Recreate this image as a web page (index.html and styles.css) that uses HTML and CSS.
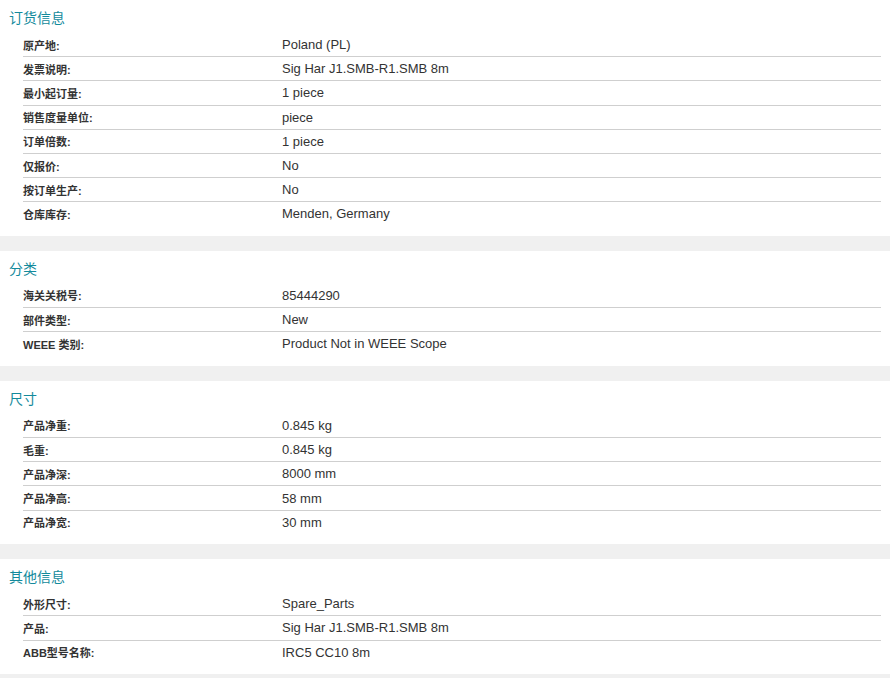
FILE: index.html
```html
<!DOCTYPE html>
<html lang="zh-CN">
<head>
    <meta charset="UTF-8">
    <title>产品信息</title>
    <link rel="stylesheet" href="styles.css">
</head>
<body>

    <div class="section">
        <h2>订货信息</h2>
        <div class="rows">
            <div class="row"><span class="label">原产地:</span><span class="value">Poland (PL)</span></div>
            <div class="row"><span class="label">发票说明:</span><span class="value">Sig Har J1.SMB-R1.SMB 8m</span></div>
            <div class="row"><span class="label">最小起订量:</span><span class="value">1 piece</span></div>
            <div class="row"><span class="label">销售度量单位:</span><span class="value">piece</span></div>
            <div class="row"><span class="label">订单倍数:</span><span class="value">1 piece</span></div>
            <div class="row"><span class="label">仅报价:</span><span class="value">No</span></div>
            <div class="row"><span class="label">按订单生产:</span><span class="value">No</span></div>
            <div class="row"><span class="label">仓库库存:</span><span class="value">Menden, Germany</span></div>
        </div>
    </div>

    <div class="section">
        <h2>分类</h2>
        <div class="rows">
            <div class="row"><span class="label">海关关税号:</span><span class="value">85444290</span></div>
            <div class="row"><span class="label">部件类型:</span><span class="value">New</span></div>
            <div class="row"><span class="label">WEEE 类别:</span><span class="value">Product Not in WEEE Scope</span></div>
        </div>
    </div>

    <div class="section">
        <h2>尺寸</h2>
        <div class="rows">
            <div class="row"><span class="label">产品净重:</span><span class="value">0.845 kg</span></div>
            <div class="row"><span class="label">毛重:</span><span class="value">0.845 kg</span></div>
            <div class="row"><span class="label">产品净深:</span><span class="value">8000 mm</span></div>
            <div class="row"><span class="label">产品净高:</span><span class="value">58 mm</span></div>
            <div class="row"><span class="label">产品净宽:</span><span class="value">30 mm</span></div>
        </div>
    </div>

    <div class="section">
        <h2>其他信息</h2>
        <div class="rows">
            <div class="row"><span class="label">外形尺寸:</span><span class="value">Spare_Parts</span></div>
            <div class="row"><span class="label">产品:</span><span class="value">Sig Har J1.SMB-R1.SMB 8m</span></div>
            <div class="row"><span class="label">ABB型号名称:</span><span class="value">IRC5 CC10 8m</span></div>
        </div>
    </div>

</body>
</html>
```

FILE: styles.css
```css
body {
    margin: 0;
    padding: 0;
    background-color: #fff;
    font-family: "Liberation Sans", Arial, "Noto Sans CJK SC", sans-serif;
    color: #333;
}

/* Bloco de cada grupo */
.section {
    padding: 8px 9px 10.4px 9px;
    border-bottom: 15px solid #f0f0f0;
}

.section h2 {
    margin: 0 0 5px 0;
    font-size: 14px;
    font-weight: normal;
    line-height: 20px;
    color: #138a9c;
}

.rows {
    margin-left: 14px;
}

.row {
    display: flex;
    align-items: center;
    height: 23.2px;
    border-bottom: 1px solid #cfcfcf;
}

.row:last-child {
    border-bottom: none;
}

.label {
    width: 259px;
    font-size: 11px;
    font-weight: bold;
    color: #333;
}

.value {
    font-size: 13px;
    color: #333;
}
```
